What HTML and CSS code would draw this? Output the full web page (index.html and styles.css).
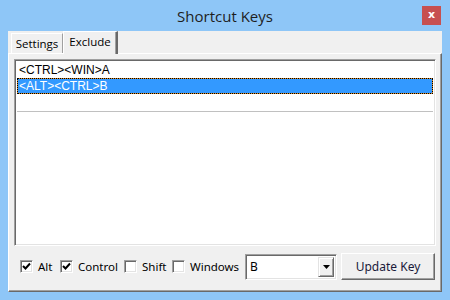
FILE: index.html
```html
<!DOCTYPE html>
<html>
<head>
<meta charset="utf-8">
<link rel="stylesheet" href="styles.css">
</head>
<body>
<div class="window">
  <div class="titlebar">
    <div class="title">Shortcut Keys</div>
    <div class="close">x</div>
  </div>
  <div class="client">
    <div class="tabs">
      <div class="tab">Settings</div>
      <div class="tab active">Exclude</div>
    </div>
    <div class="panel">
      <div class="listbox">
        <div class="item">&lt;CTRL&gt;&lt;WIN&gt;A</div>
        <div class="item selected">&lt;ALT&gt;&lt;CTRL&gt;B</div>
        <div class="divider"></div>
      </div>
      <div class="controls">
        <label class="check w-alt"><span class="box checked"><svg viewBox="0 0 9 9" width="9" height="9"><path d="M1 4 L3.5 6.5 L8 1.5" fill="none" stroke="#000" stroke-width="2"/></svg></span>Alt</label>
        <label class="check w-ctrl"><span class="box checked"><svg viewBox="0 0 9 9" width="9" height="9"><path d="M1 4 L3.5 6.5 L8 1.5" fill="none" stroke="#000" stroke-width="2"/></svg></span>Control</label>
        <label class="check w-shift"><span class="box"></span>Shift</label>
        <label class="check w-win"><span class="box"></span>Windows</label>
        <div class="combo">
          <span class="combo-text">B</span>
          <span class="drop"><svg viewBox="0 0 7 4" width="7" height="4"><path d="M0 0 H7 L3.5 4 Z" fill="#000"/></svg></span>
        </div>
        <div class="button">Update Key</div>
      </div>
    </div>
  </div>
</div>
</body>
</html>
```
FILE: styles.css
```css
* { box-sizing: border-box; }
html, body { margin: 0; padding: 0; }
body {
  width: 450px;
  height: 300px;
  background: #8ec6f7;
  overflow: hidden;
  font-family: "Liberation Sans", Arial, sans-serif;
}
.window {
  width: 450px;
  height: 300px;
  display: flex;
  flex-direction: column;
}
.titlebar {
  height: 31px;
  display: grid;
  grid-template-columns: 1fr auto 1fr;
  align-items: start;
}
.title {
  grid-column: 2;
  font-family: "Open Sans", "Noto Sans", sans-serif;
  font-size: 15px;
  color: #1e1e1e;
  line-height: 20px;
  padding-top: 6px;
}
.close {
  grid-column: 3;
  justify-self: end;
  margin-top: 6px;
  margin-right: 9px;
  width: 19px;
  height: 19px;
  background: #c75050;
  color: #fff;
  font-family: "DejaVu Sans", sans-serif;
  font-weight: bold;
  font-size: 11px;
  line-height: 18px;
  text-align: center;
}
.client {
  margin: 0 8px;
  height: 261px;
  background: #f0f0f0;
  display: flex;
  flex-direction: column;
}
.tabs {
  height: 22px;
  display: flex;
  align-items: flex-end;
  padding-left: 3px;
  position: relative;
  z-index: 2;
}
.tab {
  height: 20px;
  padding: 0;
  font-family: "Open Sans", "Noto Sans", sans-serif;
  font-size: 11.5px;
  line-height: 20px;
  color: #000;
  background: #f0f0f0;
  border-left: 1px solid #fff;
  border-top: 1px solid #fff;
  border-right: 1px solid #a0a0a0;
  width: 52px;
  text-align: center;
}
.tab.active {
  height: 23px;
  margin-bottom: -1px;
  width: 55px;
  border-right: 2px solid #696969;
  box-shadow: inset -1px 0 #a0a0a0;
  line-height: 20px;
  padding-bottom: 3px;
}
.panel {
  flex: 1;
  border-left: 1px solid #fff;
  border-top: 1px solid #fff;
  border-right: 1px solid #696969;
  border-bottom: 1px solid #696969;
  box-shadow: inset -1px -1px #a0a0a0;
  padding: 5px 5px 0 5px;
  display: flex;
  flex-direction: column;
}
.listbox {
  height: 187px;
  background: #fff;
  border-top: 1px solid #a0a0a0;
  border-left: 1px solid #a0a0a0;
  border-right: 1px solid #fff;
  border-bottom: 1px solid #fff;
  box-shadow: inset 1px 1px #696969, inset -1px -1px #e3e3e3;
  padding: 2px 2px;
  font-size: 12px;
  color: #000;
}
.item {
  height: 16px;
  line-height: 16px;
  padding-left: 2px;
}
.item.selected {
  background: #3399ff;
  color: #fff;
  outline: 1px dotted #000;
  outline-offset: -1px;
  box-shadow: inset 0 0 0 1px #e08b22;
}
.divider {
  margin-top: 17px;
  height: 1px;
  background: #c0c0c0;
}
.controls {
  display: flex;
  align-items: center;
  margin-top: 7px;
  padding-left: 6px;
  font-family: "Noto Sans", sans-serif;
  font-size: 11.5px;
  color: #000;
}
.check {
  display: flex;
  align-items: center;
  gap: 5px;
}
.w-alt { width: 40px; }
.w-ctrl { width: 64px; }
.w-shift { width: 48px; }
.w-win { width: 73px; }
.box {
  width: 13px;
  height: 13px;
  background: #fff;
  border-top: 1px solid #a0a0a0;
  border-left: 1px solid #a0a0a0;
  border-right: 1px solid #fff;
  border-bottom: 1px solid #fff;
  box-shadow: inset 1px 1px #696969, inset -1px -1px #e3e3e3;
  display: flex;
  align-items: center;
  justify-content: center;
}
.combo {
  width: 92px;
  height: 26px;
  background: #fff;
  border-top: 1px solid #a0a0a0;
  border-left: 1px solid #a0a0a0;
  border-right: 1px solid #fff;
  border-bottom: 1px solid #fff;
  box-shadow: inset 1px 1px #696969, inset -1px -1px #e3e3e3;
  display: flex;
  align-items: center;
  justify-content: space-between;
  padding: 2px 2px 2px 4px;
  margin-right: 4px;
}
.combo-text { font-size: 12px; }
.drop {
  width: 16px;
  height: 20px;
  background: #f0f0f0;
  border-top: 1px solid #e3e3e3;
  border-left: 1px solid #e3e3e3;
  border-right: 1px solid #696969;
  border-bottom: 1px solid #696969;
  box-shadow: inset 1px 1px #fff, inset -1px -1px #a0a0a0;
  display: flex;
  align-items: center;
  justify-content: center;
}
.button {
  width: 94px;
  height: 27px;
  background: #f0f0f0;
  border-top: 1px solid #fff;
  border-left: 1px solid #fff;
  border-right: 1px solid #696969;
  border-bottom: 1px solid #696969;
  box-shadow: inset -1px -1px #a0a0a0;
  display: flex;
  align-items: center;
  justify-content: center;
  font-size: 12px;
  color: #1a1a3a;
}
```
